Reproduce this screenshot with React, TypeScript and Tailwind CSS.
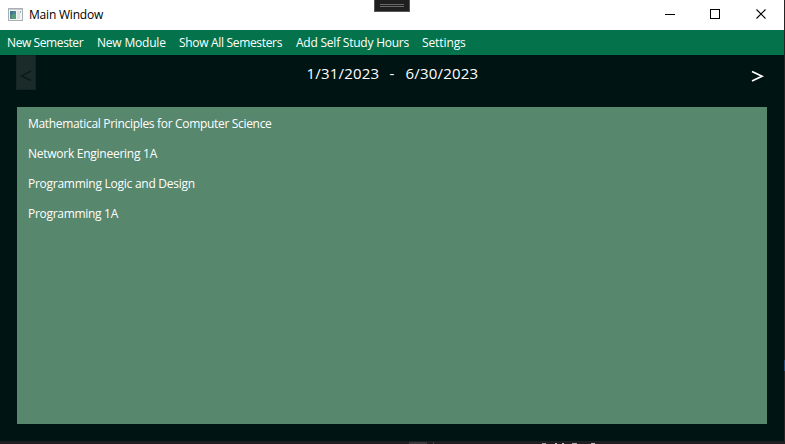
const menuItems = [
  { label: 'New Semester', style: 'w-[90px] tracking-[-0.4px]' },
  { label: 'New Module', style: 'w-[82px] tracking-[-0.2px]' },
  { label: 'Show All Semesters', style: 'w-[117px] tracking-[-0.32px]' },
  { label: 'Add Self Study Hours', style: 'w-[126px] tracking-[-0.23px]' },
  { label: 'Settings', style: 'w-[60px] tracking-[-0.1px]' },
];

const modules = [
  { name: 'Mathematical Principles for Computer Science', style: 'tracking-[-0.32px]' },
  { name: 'Network Engineering 1A', style: 'tracking-[-0.26px]' },
  { name: 'Programming Logic and Design', style: 'tracking-[-0.26px]' },
  { name: 'Programming 1A', style: 'tracking-[-0.3px]' },
];

function AppIcon() {
  return (
    <svg width="16" height="15" viewBox="0 0 16 15" shapeRendering="crispEdges">
      <rect x="0" y="0" width="15" height="13" fill="#a9afb5" />
      <rect x="1" y="1" width="13" height="1" fill="#c5cacd" />
      <rect x="1" y="2" width="13" height="10" fill="#f2f5f3" />
      <rect x="2" y="3" width="6" height="8" fill="#4d8590" />
      <rect x="2" y="3" width="3" height="4" fill="#3c7794" />
      <rect x="4" y="6" width="4" height="5" fill="#579b7a" />
      <rect x="9" y="3" width="3" height="8" fill="#dce5e0" />
      <rect x="12" y="3" width="1" height="2" fill="#9fb2c3" />
    </svg>
  );
}

function TitleBar() {
  return (
    <header className="relative flex h-[30px] items-center bg-white pl-2">
      <AppIcon />
      <span className="ml-[5px] text-xs leading-[16px] tracking-[-0.2px] text-black">Main Window</span>
      <svg className="ml-auto mr-[16px] -mt-[2px]" width="103" height="12" viewBox="0 0 103 12" fill="none" stroke="#000">
        <path d="M0 6.5h10M45.5 1.5h9v9h-9z" shapeRendering="crispEdges" />
        <path d="M91.5 1.5l9 9M100.5 1.5l-9 9" strokeWidth="1.1" />
      </svg>
      <div className="absolute left-[374px] top-0 flex h-3 w-9 flex-col items-center gap-px border border-t-0 border-[#595959] bg-[#1f1f20] pt-1">
        <span className="h-px w-6 bg-[#696969]" />
        <span className="h-px w-6 bg-[#696969]" />
      </div>
    </header>
  );
}

export default function App() {
  return (
    <div className="flex h-[444px] w-[785px] flex-col overflow-hidden bg-[#201f20] font-['Open_Sans','Noto_Sans',sans-serif]">
      <div className="flex h-[441px]">
        <main className="flex w-[784px] flex-col bg-[#001413]">
          <TitleBar />
          <nav className="flex h-[25px] items-center bg-[#04734c] pl-[7px] pt-px text-xs text-white">
            {menuItems.map((item) => (
              <span key={item.label} className={`shrink-0 whitespace-nowrap ${item.style}`}>{item.label}</span>
            ))}
          </nav>
          <div className="flex h-[52px] items-start justify-between pl-4 pr-[20px]">
            <button className="flex h-[35px] w-5 items-center justify-center border border-[#152625] bg-[#1a2b2a]">
              <svg className="mt-[7px]" width="12" height="12" viewBox="0 0 12 12" fill="none" stroke="#0b1d1b" strokeWidth="1.6">
                <path d="M11 1L1.5 5.8L11 10.5" />
              </svg>
            </button>
            <div className="mt-2 flex w-[174px] gap-[10px] whitespace-pre text-[15px] leading-5 tracking-[0.2px] text-white">
              <span className="w-[73px]">1/31/2023</span><span className="w-[6px]">-</span><span>6/30/2023</span>
            </div>
            <svg className="mt-[15px]" width="13" height="13" viewBox="0 0 13 13" fill="none" stroke="#fff" strokeWidth="1.7">
              <path d="M1 1.5L11 6.3L1 11" />
            </svg>
          </div>
          <ul className="ml-[17px] h-[317px] w-[750px] bg-[#57876d] pl-[11px] pt-[2px] text-xs text-white">
            {modules.map((item) => (
              <li key={item.name} className="flex h-[30px] items-center"><span className={item.style}>{item.name}</span></li>
            ))}
          </ul>
        </main>
        <aside className="w-px bg-[#252526] pt-[360px]"><div className="h-[11px] bg-[#284b75]" /></aside>
      </div>
      <footer className="flex h-[3px] items-end bg-[#201f20] pl-[409px]">
        <span className="h-[2px] w-[18px] bg-[#393939]" />
        <span className="ml-[6px] h-[2px] w-px bg-[#444]" />
        <span className="ml-[108px] h-px w-1 bg-[#999]" />
        <span className="ml-[9px] h-px w-[2px] bg-[#bbb]" />
        <span className="ml-[5px] h-px w-[2px] bg-[#bbb]" />
        <span className="ml-2 h-px w-[5px] bg-[#aaa]" />
        <span className="ml-[14px] h-px w-1 bg-[#bbb]" />
      </footer>
    </div>
  );
}
